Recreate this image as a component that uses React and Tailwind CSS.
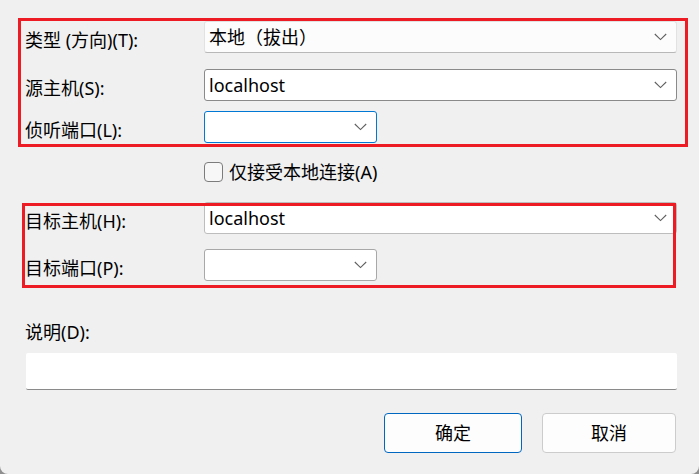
import React from "react";

const font = { fontFamily: '"Noto Sans", "Noto Sans CJK SC", sans-serif' };

function Chevron() {
  return (
    <svg width="13" height="8" viewBox="0 0 13 8" className="shrink-0">
      <path d="M0.8 1 L6.5 6.6 L12.2 1" fill="none" stroke="#5f5f5f" strokeWidth="1.1" />
    </svg>
  );
}

function Combo({ text, className }) {
  return (
    <div className={"flex items-center justify-between rounded-[3px] pl-[4px] pr-[9px] text-[18px] text-black " + className}>
      <span className="leading-none -mt-[1px]">{text}</span>
      <Chevron />
    </div>
  );
}

function Label({ children, className = "" }) {
  return <div className={"text-[18px] leading-none text-black pt-[5px] " + className}>{children}</div>;
}

export default function App() {
  return (
    <div className="w-[699px] h-[474px] bg-[#8f8f8f]" style={font}>
      <div className="relative w-[699px] h-[474px] bg-[#f0f0f0] rounded-b-[8px] pl-[25px] pr-[22px] flex flex-col">
        {/* row 1 */}
        <div className="mt-[21px] flex items-center">
          <Label className="w-[179px]">类型 (方向)(T):</Label>
          <Combo
            text="本地（拔出）"
            className="flex-1 h-[32px] bg-[#fcfcfc] border border-[#e2e2e2] border-b-[#b8b8b8]"
          />
        </div>
        {/* row 2 */}
        <div className="mt-[16px] flex items-center">
          <Label className="w-[179px]">源主机(S):</Label>
          <Combo text="localhost" className="flex-1 h-[32px] bg-white border border-[#8a8a8a]" />
        </div>
        {/* row 3 */}
        <div className="mt-[10px] flex items-center">
          <Label className="w-[179px]">侦听端口(L):</Label>
          <Combo text="" className="w-[173px] h-[32px] bg-white border border-[#0078d4]" />
        </div>
        {/* checkbox */}
        <div className="mt-[19px] flex items-center pl-[179px]">
          <div className="w-[19px] h-[20px] rounded-[4px] border border-[#7c7c7c] bg-[#f7f7f7]" />
          <span className="ml-[6px] text-[18px] leading-none text-black">仅接受本地连接(A)</span>
        </div>
        {/* row 4 */}
        <div className="mt-[20px] flex items-center">
          <Label className="w-[179px]">目标主机(H):</Label>
          <Combo text="localhost" className="flex-1 h-[32px] bg-white border border-[#bdbdbd]" />
        </div>
        {/* row 5 */}
        <div className="mt-[15px] flex items-center">
          <Label className="w-[179px]">目标端口(P):</Label>
          <Combo text="" className="w-[173px] h-[32px] bg-white border border-[#a8a8a8]" />
        </div>
        {/* description */}
        <div className="mt-[42px] text-[18px] leading-none text-black">说明(D):</div>
        <div className="mt-[12px] ml-[1px] h-[37px] bg-white border-b border-[#8a8a8a] rounded-[2px]" />
        {/* buttons */}
        <div className="mt-[23px] flex justify-end gap-[20px] pr-[1px]">
          <button className="w-[138px] h-[40px] rounded-[4px] bg-[#fdfdfd] border border-[#0067c0] text-[18px] text-black">
            确定
          </button>
          <button className="w-[134px] h-[40px] rounded-[4px] bg-[#fdfdfd] border border-[#cccccc] text-[18px] text-black">
            取消
          </button>
        </div>

        {/* red annotation boxes */}
        <div className="absolute left-[18px] top-[18px] w-[670px] h-[129px] border-[3px] border-[#ed1c24] pointer-events-none" />
        <div className="absolute left-[22px] top-[203px] w-[654px] h-[85px] border-[3px] border-[#ed1c24] pointer-events-none" />
      </div>
    </div>
  );
}
